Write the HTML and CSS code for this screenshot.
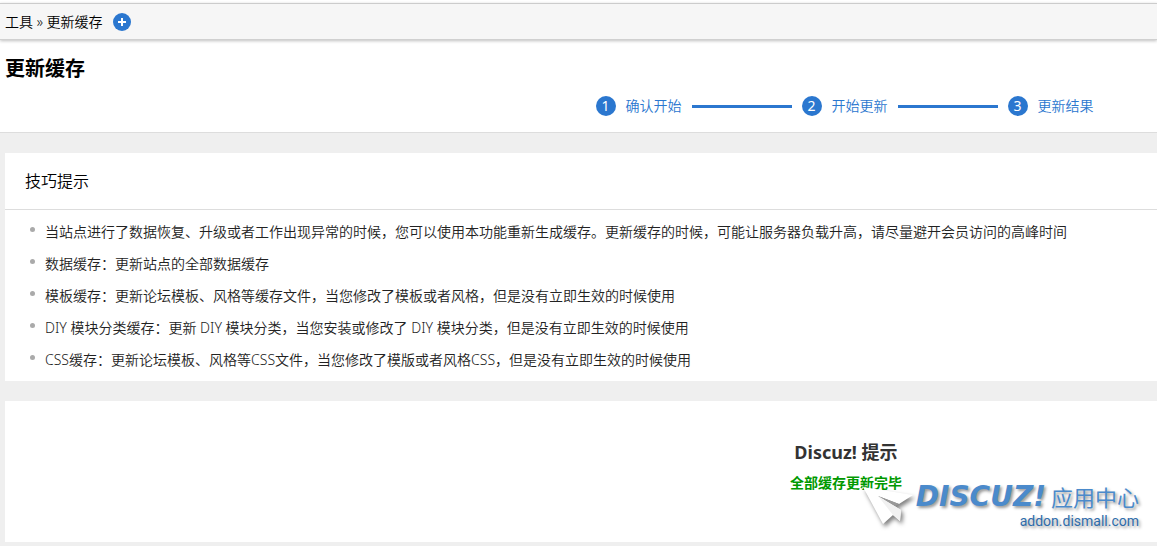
FILE: index.html
```html
<!DOCTYPE html>
<html lang="zh-CN">
<head>
<meta charset="utf-8">
<title>更新缓存</title>
<link rel="stylesheet" href="styles.css">
</head>
<body>
<nav class="crumbs">
  <span>工具&nbsp;»&nbsp;更新缓存</span>
  <button class="add" type="button" aria-label="添加常用操作">
    <svg viewBox="0 0 18 18" width="18" height="18"><circle cx="9" cy="9" r="9" fill="#2b77cf"/><path d="M9 5v8M5 9h8" stroke="#fff" stroke-width="2"/></svg>
  </button>
</nav>
<header class="head">
  <h1 class="title">更新缓存</h1>
  <ol class="steps">
    <li class="step"><span class="num">1</span><span>确认开始</span></li>
    <li class="step"><span class="num">2</span><span>开始更新</span></li>
    <li class="step"><span class="num">3</span><span>更新结果</span></li>
  </ol>
</header>
<main class="main">
  <section class="panel">
    <h2 class="panel-title">技巧提示</h2>
    <ul class="tips">
      <li class="tip">当站点进行了数据恢复、升级或者工作出现异常的时候，您可以使用本功能重新生成缓存。更新缓存的时候，可能让服务器负载升高，请尽量避开会员访问的高峰时间</li>
      <li class="tip">数据缓存：更新站点的全部数据缓存</li>
      <li class="tip">模板缓存：更新论坛模板、风格等缓存文件，当您修改了模板或者风格，但是没有立即生效的时候使用</li>
      <li class="tip">DIY 模块分类缓存：更新 DIY 模块分类，当您安装或修改了 DIY 模块分类，但是没有立即生效的时候使用</li>
      <li class="tip">CSS缓存：更新论坛模板、风格等CSS文件，当您修改了模版或者风格CSS，但是没有立即生效的时候使用</li>
    </ul>
  </section>
  <section class="panel message">
    <h3 class="message-title">Discuz! 提示</h3>
    <p class="message-text">全部缓存更新完毕</p>
    <div class="brand">
      <svg class="plane" viewBox="0 0 52 44" width="52" height="44" aria-hidden="true">
        <path d="M1 1 51 9 37 18 16 10 39 24 38 35 31 29 21 38Z" fill="#fff"/>
        <path d="M16 10 37 18 33 20Z" fill="#999"/>
        <path d="M16 10 39 24 38 35 31 29Z" fill="#f1f1f1"/>
      </svg>
      <div class="wordmark">
        <div class="brand-line"><span class="brand-name">DISCUZ!</span><span class="brand-cn">应用中心</span></div>
        <div class="brand-url">addon.dismall.com</div>
      </div>
    </div>
  </section>
</main>
</body>
</html>
```
FILE: styles.css
```css
* { box-sizing: border-box; }
body {
  margin: 0;
  padding-top: 3px;
  background: #fff;
  color: #222;
  font: 350 14px/20px "Noto Sans", "Noto Sans CJK SC", sans-serif;
}
h1, h2, h3, p, ol, ul { margin: 0; padding: 0; }
ol, ul { list-style: none; }
.crumbs {
  display: flex;
  align-items: center;
  gap: 10px;
  height: 37px;
  padding-left: 5px;
  border-top: 1px solid #ccc;
  border-bottom: 1px solid #d0d0d0;
  background: #f6f6f6;
  box-shadow: 0 1px 3px rgba(0, 0, 0, .25);
  color: #000;
}
.add { display: flex; padding: 0; border: 0; background: none; }
.head { padding: 15px 0 16px; border-bottom: 1px solid #ddd; }
.title { padding-left: 5px; color: #000; font-size: 20px; line-height: 28px; font-weight: 700; }
.steps {
  display: flex;
  justify-content: center;
  gap: 10px;
  margin-top: 13px;
  padding-left: 46%;
  color: #2b77cf;
}
.step { display: flex; align-items: center; gap: 10px; white-space: nowrap; }
.step:not(:last-child)::after { content: ""; width: 100px; height: 3px; background: #2b77cf; }
.num { width: 20px; height: 20px; border-radius: 50%; background: #2b77cf; color: #fff; font-weight: 400; text-align: center; }
.main { display: grid; gap: 20px; padding: 20px 0 4px 5px; background: #efefef; }
.panel { background: #fff; }
.panel-title {
  padding: 16px 20px;
  border-bottom: 1px solid #ddd;
  color: #000;
  font-size: 16px;
  line-height: 24px;
  font-weight: 350;
}
.tips { padding: 6px 20px 5px; line-height: 32px; }
.tip { display: flex; gap: 10px; padding-left: 5px; }
.tip::before { content: ""; flex: none; width: 5px; height: 5px; margin-top: 11px; border-radius: 50%; background: #aaa; }
.message { position: relative; padding: 36px 0 47px 46%; text-align: center; }
.message-title { color: #333; font-size: 18px; line-height: 30px; font-weight: 700; }
.message-text { margin-top: 4px; color: #090; font-size: 14px; line-height: 24px; font-weight: 700; }
.brand { position: absolute; right: 18px; bottom: 12px; display: flex; gap: 2px; text-align: right; }
.plane { filter: drop-shadow(2px 3px 2px rgba(0, 0, 0, .5)); }
.wordmark { color: #4b8acb; text-shadow: 2px 2px 3px rgba(0, 0, 0, .4); white-space: nowrap; }
.brand-line { display: flex; align-items: center; justify-content: flex-end; gap: 5px; height: 22px; }
.brand-name { font: italic 700 28px/22px "DejaVu Sans", sans-serif; }
.brand-cn { font-size: 22px; line-height: 22px; font-weight: 400; }
.brand-url { padding-top: 4px; color: #2f6cab; font: 400 14px/18px Roboto, sans-serif; }
```
